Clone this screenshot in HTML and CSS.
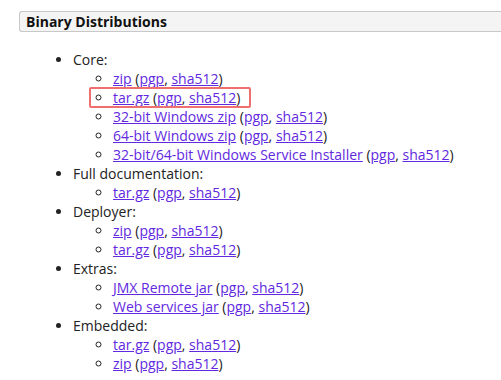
FILE: index.html
```html
<!DOCTYPE html>
<html lang="en">
<head>
  <meta charset="UTF-8">
  <title>Binary Distributions</title>
  <link rel="stylesheet" href="styles.css">
</head>
<body>
  <div class="section">
    <h3 class="section-title">Binary Distributions</h3>
    <ul class="dist-list">
      <li>Core:
        <ul>
          <li><a href="#">zip</a> (<a href="#">pgp</a>, <a href="#">sha512</a>)</li>
          <li class="marked"><a href="#">tar.gz</a> (<a href="#">pgp</a>, <a href="#">sha512</a>)<span class="mark-box"></span></li>
          <li><a href="#">32-bit Windows zip</a> (<a href="#">pgp</a>, <a href="#">sha512</a>)</li>
          <li><a href="#">64-bit Windows zip</a> (<a href="#">pgp</a>, <a href="#">sha512</a>)</li>
          <li><a href="#">32-bit/64-bit Windows Service Installer</a> (<a href="#">pgp</a>, <a href="#">sha512</a>)</li>
        </ul>
      </li>
      <li>Full documentation:
        <ul>
          <li><a href="#">tar.gz</a> (<a href="#">pgp</a>, <a href="#">sha512</a>)</li>
        </ul>
      </li>
      <li>Deployer:
        <ul>
          <li><a href="#">zip</a> (<a href="#">pgp</a>, <a href="#">sha512</a>)</li>
          <li><a href="#">tar.gz</a> (<a href="#">pgp</a>, <a href="#">sha512</a>)</li>
        </ul>
      </li>
      <li>Extras:
        <ul>
          <li><a href="#">JMX Remote jar</a> (<a href="#">pgp</a>, <a href="#">sha512</a>)</li>
          <li><a href="#">Web services jar</a> (<a href="#">pgp</a>, <a href="#">sha512</a>)</li>
        </ul>
      </li>
      <li>Embedded:
        <ul>
          <li><a href="#">tar.gz</a> (<a href="#">pgp</a>, <a href="#">sha512</a>)</li>
          <li><a href="#">zip</a> (<a href="#">pgp</a>, <a href="#">sha512</a>)</li>
        </ul>
      </li>
    </ul>
  </div>
</body>
</html>
```

FILE: styles.css
```css
body {
  margin: 0;
  font-family: 'Open Sans', sans-serif;
  font-size: 14px;
  line-height: 19px;
  color: #222;
  background: #fff;
}

.section {
  padding: 11px 0 0 19px;
}

/* the title bar runs off the right edge of the window */
.section-title {
  margin: 0;
  padding: 0 6px;
  font-size: 14px;
  font-weight: bold;
  color: #111;
  background: #f4f4f4;
  border: 1px solid #c8c8c8;
  border-right: none;
  border-radius: 3px 0 0 3px;
}

.dist-list {
  margin: 18px 0 0;
  padding-left: 54px;
  list-style: disc;
}

.dist-list ul {
  margin: 0;
  padding-left: 40px;
  list-style: circle;
}

a {
  color: #6229e0;
  text-decoration: underline;
}

.marked {
  position: relative;
}

/* red frame drawn over the highlighted row */
.mark-box {
  position: absolute;
  left: -24px;
  top: -1px;
  width: 162px;
  height: 21px;
  box-sizing: border-box;
  border: 2px solid #ef6f6f;
  border-radius: 2px;
}
```
